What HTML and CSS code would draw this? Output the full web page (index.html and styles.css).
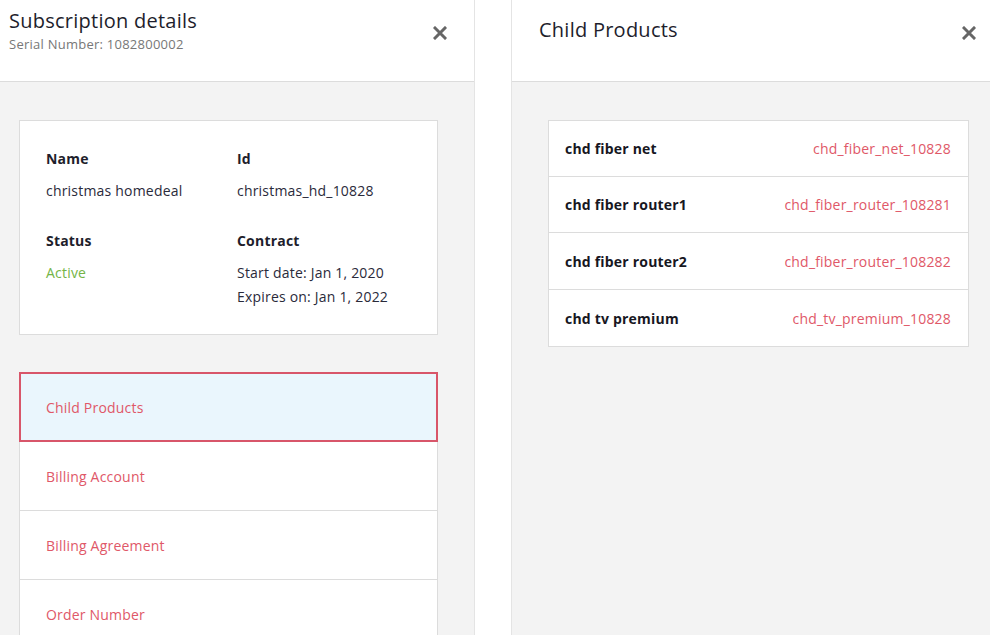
FILE: index.html
```html
<!DOCTYPE html>
<html>
<head>
<meta charset="utf-8">
<link rel="stylesheet" href="styles.css">
</head>
<body>
<div class="page">
  <section class="panel panel-left">
    <header class="panel-head head-left">
      <div class="head-text">
        <h1 class="title">Subscription details</h1>
        <div class="subtitle">Serial Number: 1082800002</div>
      </div>
      <button class="close close-left" aria-label="Close">
        <svg width="14" height="14" viewBox="0 0 14 14"><path d="M2 2 L12 12 M12 2 L2 12" stroke="#666" stroke-width="3" stroke-linecap="square" fill="none"/></svg>
      </button>
    </header>
    <div class="panel-body body-left">
      <div class="card">
        <div class="field">
          <div class="label">Name</div>
          <div class="value">christmas homedeal</div>
        </div>
        <div class="field">
          <div class="label">Id</div>
          <div class="value">christmas_hd_10828</div>
        </div>
        <div class="field">
          <div class="label">Status</div>
          <div class="value active">Active</div>
        </div>
        <div class="field">
          <div class="label">Contract</div>
          <div class="value">Start date: Jan 1, 2020</div>
          <div class="value">Expires on: Jan 1, 2022</div>
        </div>
      </div>
      <ul class="menu">
        <li class="menu-item selected">Child Products</li>
        <li class="menu-item">Billing Account</li>
        <li class="menu-item">Billing Agreement</li>
        <li class="menu-item">Order Number</li>
      </ul>
    </div>
  </section>
  <section class="panel panel-right">
    <header class="panel-head head-right">
      <h1 class="title">Child Products</h1>
      <button class="close close-right" aria-label="Close">
        <svg width="14" height="14" viewBox="0 0 14 14"><path d="M2 2 L12 12 M12 2 L2 12" stroke="#666" stroke-width="3" stroke-linecap="square" fill="none"/></svg>
      </button>
    </header>
    <div class="panel-body body-right">
      <ul class="products">
        <li class="product"><span class="pname">chd fiber net</span><span class="pid">chd_fiber_net_10828</span></li>
        <li class="product"><span class="pname">chd fiber router1</span><span class="pid">chd_fiber_router_108281</span></li>
        <li class="product"><span class="pname">chd fiber router2</span><span class="pid">chd_fiber_router_108282</span></li>
        <li class="product"><span class="pname">chd tv premium</span><span class="pid">chd_tv_premium_10828</span></li>
      </ul>
    </div>
  </section>
</div>
</body>
</html>
```

FILE: styles.css
```css
* { box-sizing: border-box; }
html, body {
  margin: 0;
  padding: 0;
  height: 635px;
  overflow: hidden;
  background: #ffffff;
  font-family: "Open Sans", "Liberation Sans", sans-serif;
  color: #1f1f2b;
}
.page {
  display: flex;
  height: 635px;
  gap: 36px;
}
.panel {
  display: flex;
  flex-direction: column;
  height: 635px;
  background: #f3f3f3;
}
.panel-left {
  width: 475px;
  border-right: 1px solid #e4e4e4;
}
.panel-right {
  flex: 1;
  border-left: 1px solid #e4e4e4;
}
.panel-head {
  height: 82px;
  flex: none;
  background: #ffffff;
  border-bottom: 1px solid #dcdcdc;
  display: flex;
  justify-content: space-between;
  align-items: flex-start;
}
.head-left { padding: 7px 0 0 9px; }
.head-right { padding: 16px 0 0 27px; }
.title {
  margin: 0;
  font-size: 20px;
  line-height: 27px;
  font-weight: 400;
  letter-spacing: 0.25px;
  color: #1e1e2c;
}
.subtitle {
  font-size: 13px;
  line-height: 18px;
  margin-top: 1px;
  letter-spacing: 0.25px;
  color: #777;
}
.close {
  border: 0;
  background: none;
  padding: 0;
  width: 14px;
  height: 14px;
  display: block;
  cursor: pointer;
}
.close-left { margin: 19px 27px 0 0; }
.close-right { margin: 10px 14px 0 0; }
.close svg { display: block; }

.body-left { padding: 38px 36px 0 19px; }
.body-right { padding: 38px 21px 0 36px; }

.card {
  background: #fff;
  border: 1px solid #dcdcdc;
  padding: 28px 20px 25px 26px;
  display: grid;
  grid-template-columns: 191px 1fr;
  row-gap: 28px;
}
.label {
  font-size: 14px;
  line-height: 20px;
  font-weight: 700;
  letter-spacing: 0.2px;
  color: #1e1e2c;
  margin-bottom: 10px;
}
.value {
  font-size: 14px;
  line-height: 24px;
  letter-spacing: 0.2px;
  color: #2a2a3a;
}
.value.active { color: #74b446; }

.menu {
  list-style: none;
  margin: 37px 0 0 0;
  padding: 0;
}
.menu-item {
  position: relative;
  height: 70px;
  margin-top: -1px;
  background: #fff;
  border: 1px solid #dcdcdc;
  display: flex;
  align-items: center;
  padding-left: 26px;
  font-size: 14px;
  letter-spacing: 0.2px;
  color: #e05868;
}
.menu-item:first-child { margin-top: 0; }
.menu-item.selected {
  z-index: 1;
  background: #eaf6fd;
  border: 2px solid #d8566a;
  padding-left: 25px;
}

.products {
  list-style: none;
  margin: 0;
  padding: 0;
}
.product {
  height: 57px;
  margin-top: -1px;
  background: #fff;
  border: 1px solid #dcdcdc;
  display: flex;
  align-items: center;
  justify-content: space-between;
  padding: 0 17px 0 16px;
  font-size: 14px;
  letter-spacing: 0.2px;
}
.product:first-child { margin-top: 0; }
.product:nth-child(n+3) { height: 58px; }
.pname { font-weight: 700; color: #17171f; }
.pid { color: #e05868; }
```
